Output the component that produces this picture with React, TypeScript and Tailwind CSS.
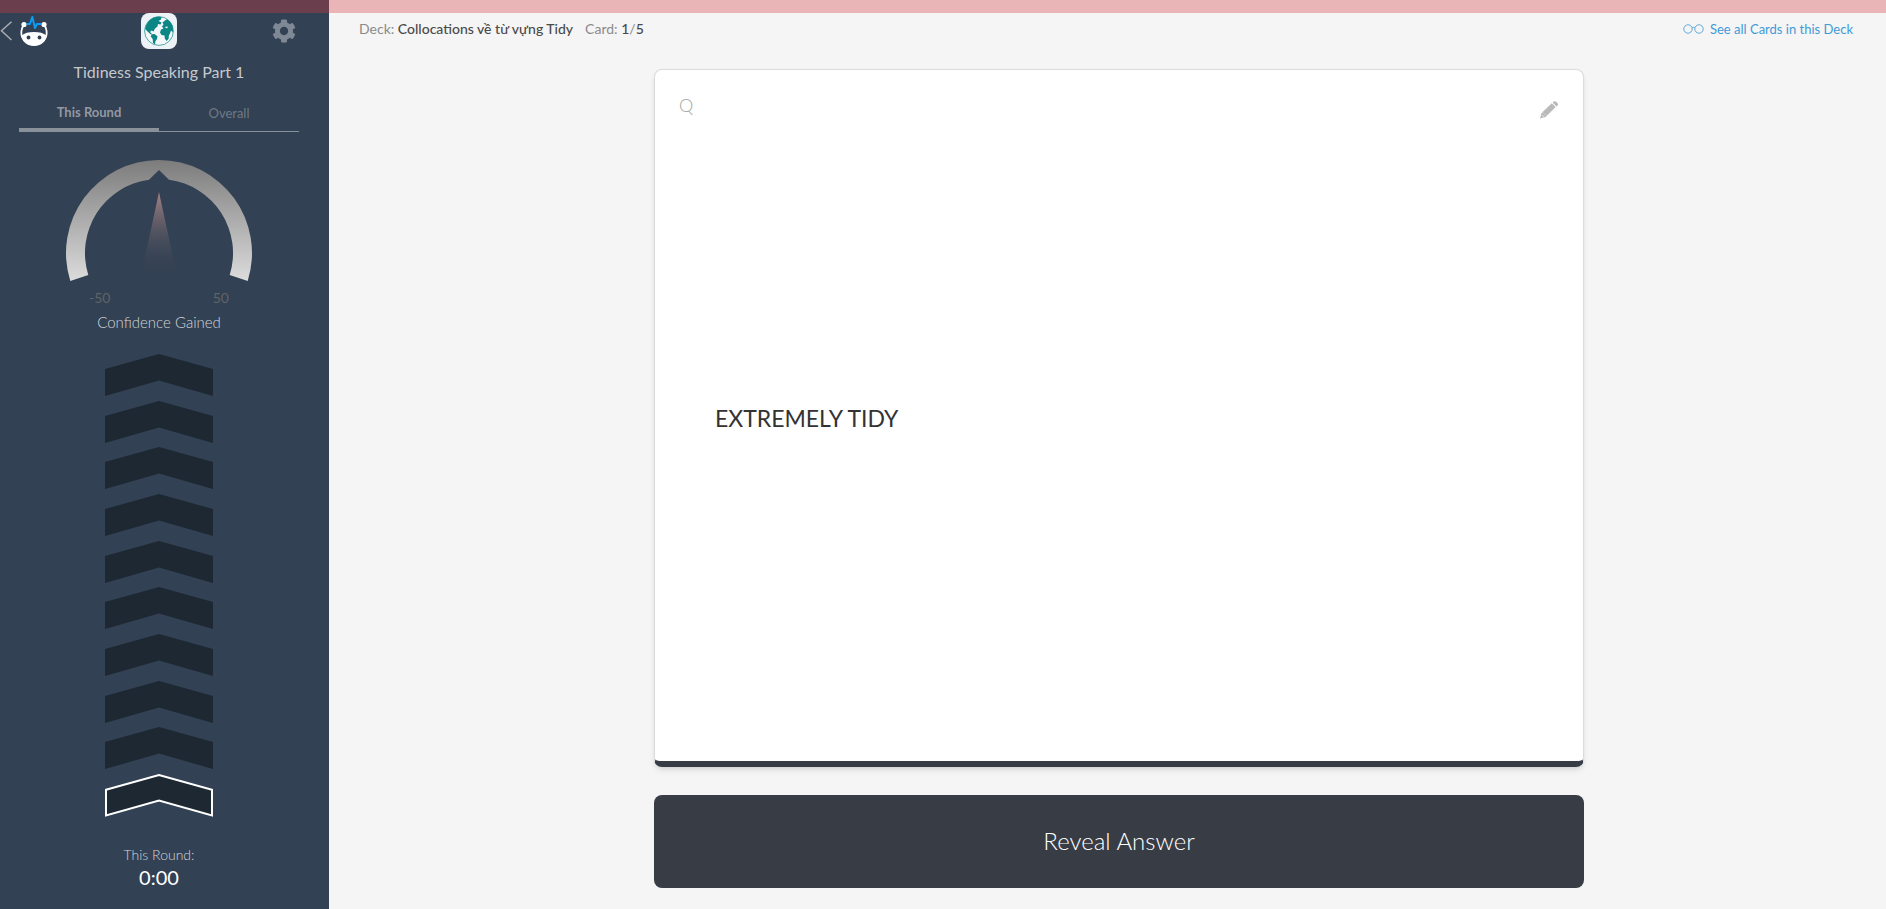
import { useState } from "react";

const LEVELS = [10, 9, 8, 7, 6, 5, 4, 3, 2, 1];
const CURRENT_LEVEL = 1;

const LogoIcon = () => (
  <svg width="28" height="30" viewBox="0 0 28 30" aria-hidden="true">
    <path
      d="M4 9 C1 12 .8 18 2 21 C4 26 8.500 28.600 14 28.600 C19.500 28.600 24 26 26 21 C27.200 18 27 12 24 9"
      fill="none"
      stroke="#fff"
      strokeWidth="1.800"
    />
    <circle cx="4" cy="8.500" r="2.600" fill="#fff" />
    <circle cx="24" cy="8.500" r="2.600" fill="#fff" />
    <path
      d="M1.500 19.500 C4.500 17 8.500 16 14 16 C19.500 16 23.500 17 26.500 19.500 C25.500 26 20.500 30 14 30 C7.500 30 2.500 26 1.500 19.500 Z"
      fill="#fff"
    />
    <circle cx="8.500" cy="21.500" r="1.900" fill="#324153" />
    <circle cx="19.500" cy="21.500" r="1.900" fill="#324153" />
    <path
      d="M6.500 8 H10 L12.300 1 L15 12 L17 8 H21.500"
      fill="none"
      stroke="#0c9bf5"
      strokeWidth="2"
      strokeLinejoin="round"
    />
  </svg>
);

const GlobeIcon = () => (
  <svg width="30" height="30" viewBox="0 0 30 30" aria-hidden="true">
    <circle cx="15" cy="15" r="14.400" fill="#f3f7f9" stroke="#0a8684" strokeWidth=".7" />
    <g fill="#0a8684">
      <path d="M1.200 13 C1.800 8 5.500 3.500 9 2 L13 .8 L17.500 .9 L17 3.500 L14.500 5 L17.500 6.500 L16.500 8.500 L14 8 L13.500 10.500 L11 12.500 L9.500 15.500 L7.500 14.500 L6 16 L8 18 L6.500 18.200 L3.500 15.500 Z" />
      <path d="M7.500 18.200 L10.500 18 L13.500 20.200 L13 23 L11.500 25 L11 28.300 L9 27 L8.700 23 L6.800 20.500 Z" />
      <path d="M19.500 8.500 L18.500 6.500 L21 4.500 L23 3.200 C26.500 5.500 28.500 8.500 29 12 L28.800 16.500 L27 14.500 L26 17.500 L25 19 L24.500 23 L22.500 25 L20.800 22.500 L20.500 19.500 L17.500 19 L16 16.500 L17 13.500 L19.500 12.500 L18 10.500 Z" />
    </g>
    <path d="M20.500 11 L24 10.500 L23 12.500 Z" fill="#f3f7f9" />
  </svg>
);

const GearIcon = () => (
  <svg width="24" height="24" viewBox="0 0 512 512" fill="#7f8895" aria-hidden="true">
    <path d="M487.400 315.700l-42.600-24.600c4.300-23.200 4.300-47 0-70.200l42.600-24.600c4.900-2.800 7.100-8.600 5.500-14-11.100-35.600-30-67.800-54.700-94.600-3.800-4.100-10-5.100-14.800-2.300L380.800 110c-17.900-15.400-38.500-27.300-60.800-35.100V25.800c0-5.600-3.900-10.500-9.400-11.700-36.700-8.200-74.300-7.800-109.200 0-5.500 1.200-9.400 6.100-9.400 11.700V75c-22.200 7.900-42.800 19.800-60.800 35.100L88.700 85.500c-4.900-2.800-11-1.900-14.800 2.300-24.700 26.700-43.600 58.900-54.700 94.600-1.700 5.400.6 11.200 5.500 14L67.300 221c-4.300 23.200-4.300 47 0 70.200l-42.600 24.600c-4.900 2.800-7.100 8.600-5.500 14 11.100 35.600 30 67.800 54.700 94.600 3.800 4.100 10 5.100 14.800 2.300l42.600-24.600c17.900 15.400 38.500 27.300 60.800 35.100v49.200c0 5.600 3.900 10.500 9.400 11.700 36.700 8.200 74.300 7.800 109.200 0 5.500-1.200 9.400-6.100 9.400-11.700v-49.200c22.200-7.900 42.800-19.800 60.800-35.100l42.600 24.600c4.900 2.800 11 1.900 14.800-2.300 24.700-26.700 43.600-58.900 54.700-94.600 1.500-5.500-.7-11.300-5.600-14.100zM256 345c-49 0-89-40-89-89s40-89 89-89 89 40 89 89-40 89-89 89z" />
  </svg>
);

const PencilIcon = () => (
  <svg width="19" height="18" viewBox="0 0 19 18" fill="#b9b9b9" aria-hidden="true">
    <path d="M0 17.500 L1.500 12.200 L2.600 11.200 L6.500 15 L5.500 16 Z" />
    <path d="M2.600 11 L11.800 2.200 L15.700 6 L6.500 15 Z" />
    <path d="M12.600 1.500 C14.200 0 15.200 0 16.400 1.100 L17.600 2.300 C18.600 3.300 18.300 4.100 16.500 5.400 Z" />
    <path d="M2.200 14.300 L3.700 15.800" stroke="#fff" strokeWidth=".8" />
  </svg>
);

const GlassesIcon = () => (
  <svg width="21" height="10" viewBox="0 0 21 10" fill="none" stroke="#62a8dd" aria-hidden="true">
    <circle cx="5" cy="5" r="4.200" />
    <circle cx="16" cy="5" r="4.200" />
    <path d="M9 3.800 Q10.500 2.600 12 3.800" />
  </svg>
);

const ConfidenceGauge = () => (
  <svg width="188" height="124" viewBox="0 0 188 124" aria-hidden="true">
    <defs>
      <linearGradient id="arc" x1="0" y1="0" x2="0" y2="1">
        <stop offset="0" stopColor="#7c7c7c" />
        <stop offset="1" stopColor="#dcdcdc" />
      </linearGradient>
      <linearGradient id="needle" x1="0" y1="0" x2="0" y2="1">
        <stop offset="0" stopColor="#a88484" />
        <stop offset="1" stopColor="#324153" stopOpacity="0" />
      </linearGradient>
    </defs>
    <path
      d="M5.300 121 A93 93 0 1 1 182.700 121 L164.700 115 A74 74 0 0 0 104 19.700 L94 10 L84 19.700 A74 74 0 0 0 23.300 115 Z"
      fill="url(#arc)"
    />
    <path d="M94 32 L112 116 H76 Z" fill="url(#needle)" />
  </svg>
);

const LevelChevron = ({ active }: { active: boolean }) => (
  <svg width="108" height="43" viewBox="0 0 108 43" aria-hidden="true">
    <path
      d={
        active
          ? "M1 15.700 L54 1 L107 15.700 V41.500 L54 26.500 L1 41.500 Z"
          : "M0 15 L54 0 L108 15 V42 L54 26.500 L0 42 Z"
      }
      fill="#1e2833"
      stroke={active ? "#fff" : "none"}
      strokeWidth="2"
    />
  </svg>
);

const Sidebar = () => {
  const [tab, setTab] = useState("round");

  return (
    <aside className="flex w-[329px] shrink-0 flex-col bg-[#324153] pt-[13px] pr-[30px] pl-[19px] text-center">
      <div className="flex h-9 items-center justify-between">
        <a href="#" aria-label="Back" className="-ml-[19px] flex items-center gap-2">
          <svg width="12" height="20" viewBox="0 0 12 20" fill="none" stroke="#a9acb1" strokeWidth="1.500" aria-hidden="true">
            <path d="M11.500 .7 L1.500 9.800 L11.500 19" />
          </svg>
          <LogoIcon />
        </a>
        <div className="mr-[47px] ml-[45px] flex size-9 items-center justify-center rounded-lg bg-[#edf2f7]">
          <GlobeIcon />
        </div>
        <button aria-label="Settings" className="mr-[3px]">
          <GearIcon />
        </button>
      </div>

      <h1 className="mt-[11px] text-base leading-6 text-[#c5c9ce]">Tidiness Speaking Part 1</h1>

      <div className="mt-[15px] flex border-b border-[#87909b] text-[13px] leading-6">
        <button
          onClick={() => setTab("round")}
          className={
            tab === "round"
              ? "h-8 flex-1 border-b-[3px] border-[#8b919b] pb-1 font-bold text-[#9298a2]"
              : "h-8 flex-1 pb-1 text-[#6f7986]"
          }
        >
          This Round
        </button>
        <button
          onClick={() => setTab("overall")}
          className={
            tab === "overall"
              ? "h-8 flex-1 border-b-[3px] border-[#8b919b] pb-1 font-bold text-[#9298a2]"
              : "h-8 flex-1 pb-1 text-[#6f7986]"
          }
        >
          Overall
        </button>
      </div>

      <div className="mt-7 flex flex-col items-center">
        <ConfidenceGauge />
        <div className="mt-1 flex w-[140px] justify-between text-sm leading-5 text-[#616466]">
          <span>-50</span>
          <span>50</span>
        </div>
        <p className="mt-0.5 text-[15px] leading-6 font-light text-[#d3d6da]">Confidence Gained</p>
      </div>

      <div className="mt-5 flex flex-1 flex-col items-center justify-between">
        {LEVELS.map((level) => (
          <LevelChevron key={level} active={level === CURRENT_LEVEL} />
        ))}
      </div>

      <div className="mt-7 mb-5">
        <p className="text-sm leading-5 font-light text-[#d3d6da]">This Round:</p>
        <p className="text-xl leading-6 text-white">0:00</p>
      </div>
    </aside>
  );
};

const App = () => {
  const [revealed, setRevealed] = useState(false);

  return (
    <div className="relative flex min-h-screen bg-[#f5f5f5] font-[Lato,'Noto_Sans',sans-serif]">
      {/* round progress, tints whatever is below it */}
      <div className="absolute inset-x-0 top-0 z-10 h-[13px] bg-[#d63b41]/34" />
      <Sidebar />

      <main className="flex flex-1 flex-col pt-[13px] pr-[33px] pl-[30px]">
        <header className="flex h-8 items-center justify-between text-sm">
          <p className="flex gap-3 text-[#8a8a8a]">
            <span>
              Deck: <span className="font-medium text-[#4a4a4a]">Collocations về từ vựng Tidy</span>
            </span>
            <span>
              Card: <span className="font-medium text-[#4a4a4a]">1</span>/
              <span className="font-medium text-[#4a4a4a]">5</span>
            </span>
          </p>
          <a href="#" className="flex items-center gap-[6px] text-[13px] text-[#3f9ad9]">
            <GlassesIcon />
            See all Cards in this Deck
          </a>
        </header>

        <div className="mt-6 mb-[21px] flex flex-1 justify-center pl-[26px]">
          <div className="flex w-full max-w-[930px] flex-col gap-7">
            <section className="flex flex-1 flex-col rounded-lg border border-b-[6px] border-[#dcdcdc] border-b-[#383c45] bg-white shadow-md">
              <div className="flex items-start justify-between px-6 pt-[23px]">
                <span className="text-lg leading-6 font-light text-[#a5a5a5]">Q</span>
                <button aria-label="Edit card" className="mt-2">
                  <PencilIcon />
                </button>
              </div>
              <div className="flex flex-1 items-center px-[60px] pb-11">
                <p className="text-[23px] text-[#333]">EXTREMELY TIDY</p>
              </div>
            </section>
            <button
              onClick={() => setRevealed(!revealed)}
              className="h-[93px] w-full rounded-lg bg-[#383c45] pb-0.5 text-2xl font-light text-white"
            >
              Reveal Answer
            </button>
          </div>
        </div>
      </main>
    </div>
  );
};

export default App;
